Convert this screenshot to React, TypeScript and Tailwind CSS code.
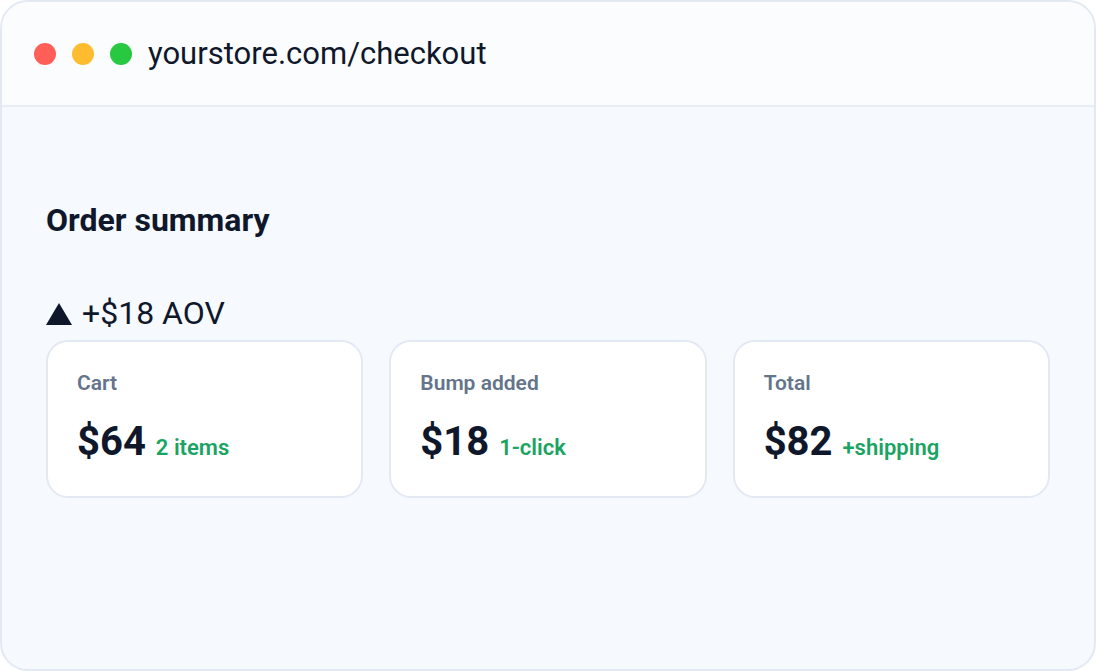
const stats = [
  { label: 'Cart', value: '$64', note: '2 items' },
  { label: 'Bump added', value: '$18', note: '1-click' },
  { label: 'Total', value: '$82', note: '+shipping' },
];

export default function App() {
  return (
    <div className="h-[671px] w-[1096px] bg-white font-['Roboto',sans-serif] text-[#0f172a]">
      <div className="flex h-full w-full flex-col overflow-hidden rounded-[28px] border-2 border-[#e3e9f3] bg-[#f6f9fe]">
        <div className="flex h-[105px] shrink-0 items-center gap-4 border-b-2 border-[#e8eef7] bg-[#fbfcfe] pl-[32px]">
          <span className="h-[22px] w-[22px] rounded-full bg-[#ff5f57]" />
          <span className="h-[22px] w-[22px] rounded-full bg-[#febc2e]" />
          <span className="h-[22px] w-[22px] rounded-full bg-[#28c840]" />
          <span className="text-[31px] leading-none">yourstore.com/checkout</span>
        </div>

        <div className="flex flex-col px-[44px] pt-[94px]">
          <h2 className="text-[32px] font-bold leading-[38px]">Order summary</h2>
          <div className="mt-[56px] flex items-center gap-[10px] text-[32px] leading-[36px]">
            <svg width="26" height="22" viewBox="0 0 26 22" className="mt-[2px]">
              <path d="M13 0 L26 22 L0 22 Z" fill="#0f172a" />
            </svg>
            <span>+$18 AOV</span>
          </div>
          <div className="mt-[9px] grid w-[1004px] grid-cols-3 gap-[26px]">
            {stats.map((s) => (
              <div
                key={s.label}
                className="flex h-[158px] flex-col rounded-[22px] border-2 border-[#e3e9f3] bg-white px-[29px] pt-[28px]"
              >
                <span className="text-[21px] font-semibold leading-[26px] text-[#64748b]">{s.label}</span>
                <div className="mt-[23px] flex items-baseline gap-[10px]">
                  <span className="text-[40px] font-bold leading-[46px]">{s.value}</span>
                  <span className="text-[22px] font-semibold text-[#1aa463]">{s.note}</span>
                </div>
              </div>
            ))}
          </div>
        </div>
      </div>
    </div>
  );
}
